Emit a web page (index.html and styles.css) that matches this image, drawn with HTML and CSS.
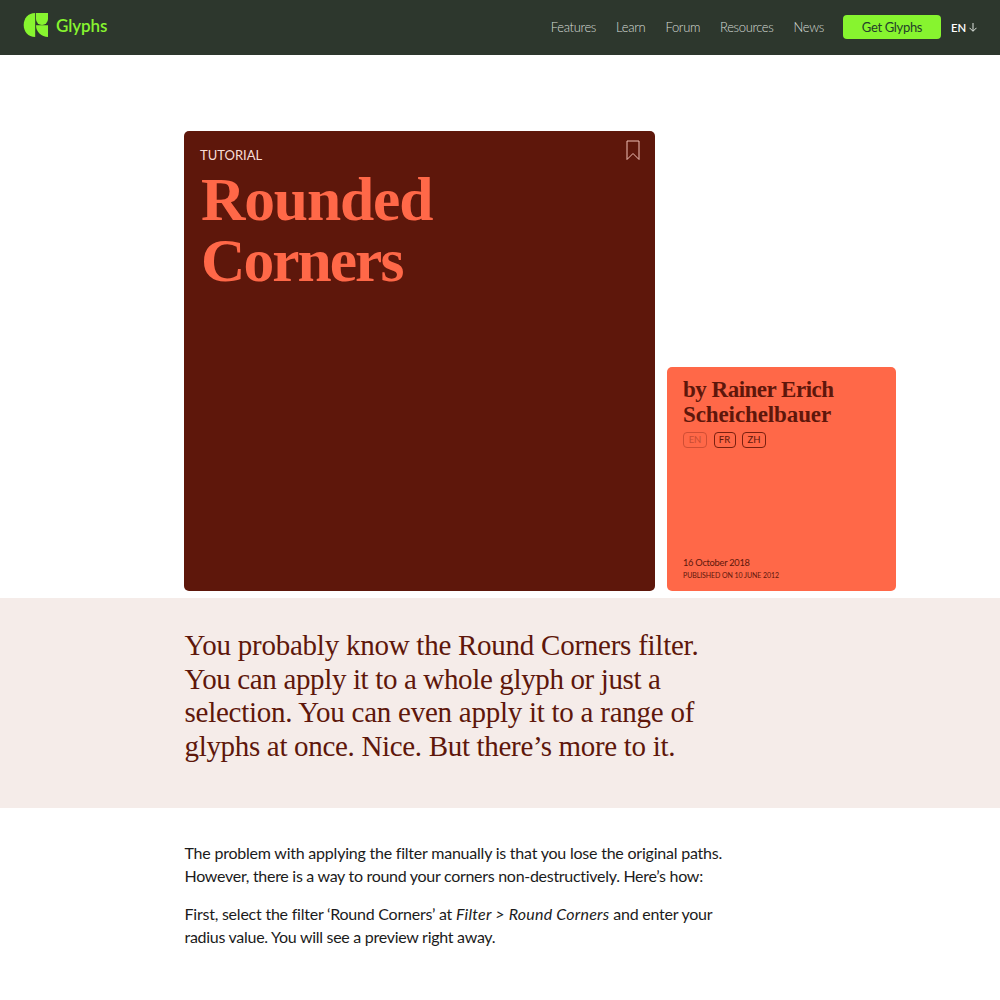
FILE: index.html
```html
<!DOCTYPE html>
<html lang="en">
<head>
<meta charset="utf-8">
<title>Rounded Corners | Glyphs</title>
<link rel="stylesheet" href="styles.css">
</head>
<body>
<header class="bar">
  <a class="brand">
    <svg class="mark" viewBox="0 0 25 24" width="25" height="24"><path d="M12.200 0v24C5 24 .7 18.500 .7 12S5 0 12.200 0z"/><path d="M13 0h12v6A6 6 0 0 1 13 6z"/><path d="M13 12.300h12V24A12 11.700 0 0 1 13 12.300z"/></svg>
    <span class="wordmark">Glyphs</span>
  </a>
  <nav class="menu">
    <a class="n1">Features</a><a class="n2">Learn</a><a class="n3">Forum</a><a class="n4">Resources</a><a class="n5">News</a>
  </nav>
  <a class="buy"><span>Get Glyphs</span></a>
  <a class="lang"><span>EN</span><svg viewBox="0 0 8 9" width="8" height="9"><path d="M4 0v8M.5 4.800L4 8.300 7.500 4.800"/></svg></a>
</header>
<main>
  <section class="hero">
    <div class="title-card">
      <div class="card-head"><span class="kind">TUTORIAL</span>
        <svg class="bookmark" viewBox="0 0 14 21" width="14" height="21"><path d="M1 1h12v18.500L7 13.500 1 19.500z"/></svg></div>
      <h1><span class="t1">Rounded</span><span class="t2">Corners</span></h1>
    </div>
    <div class="author-card">
      <h2><span class="a1">by Rainer Erich</span><br><span class="a2">Scheichelbauer</span></h2>
      <div class="chips"><span class="chip current">EN</span><span class="chip fr">FR</span><span class="chip">ZH</span></div>
      <div class="dates"><p class="updated">16 October 2018</p><p class="published">PUBLISHED ON 10 JUNE 2012</p></div>
    </div>
  </section>
  <section class="lede">
    <p><span class="l1">You probably know the Round Corners filter.</span><br><span class="l2">You can apply it to a whole glyph or just a</span><br><span class="l3">selection. You can even apply it to a range of</span><br><span class="l4">glyphs at once. Nice. But there’s more to it.</span></p>
  </section>
  <article class="body">
    <p><span class="b1">The problem with applying the filter manually is that you lose the original paths.</span><br><span class="b2">However, there is a way to round your corners non-destructively. Here’s how:</span></p>
    <p><span class="b3">First, select the filter ‘Round Corners’ at <em>Filter &gt; Round Corners</em> and enter your</span><br><span class="b4">radius value. You will see a preview right away.</span></p>
  </article>
</main>
</body>
</html>
```
FILE: styles.css
```css
* { box-sizing: border-box; }
body { margin: 0; background: #fff; color: #1b1b1b; font-family: Lato, sans-serif; }
h1, h2, p { margin: 0; white-space: nowrap; }

.bar { display: flex; align-items: center; height: 55px; padding: 0 23px; background: #2d372d; }
.brand { display: flex; align-items: center; gap: 8px; color: #87f42f; }
.mark { fill: currentColor; display: block; margin-top: -5px; }
.wordmark { font-size: 17px; line-height: 24px; font-weight: 600; letter-spacing: -.1px; margin-top: -3px; }
.menu { display: flex; gap: 20px; margin-left: auto; padding-bottom: 2px; color: #d6dcd6; font-size: 13px; font-weight: 300; }
.n1 { letter-spacing: -.35px; }
.n2 { letter-spacing: -.26px; }
.n3 { letter-spacing: -.32px; }
.n4 { letter-spacing: -.38px; }
.n5 { letter-spacing: -.3px; }
.buy { display: flex; align-items: center; justify-content: center; width: 98px; height: 24px; margin: -1px 0 0 19px; border-radius: 4px; background: #87f42f; color: #23402a; font-size: 13px; letter-spacing: -.33px; }
.lang { display: flex; align-items: center; gap: 3px; margin: -1px 0 0 10px; color: #fff; font-size: 11.300px; font-weight: 600; letter-spacing: -.1px; }
.lang svg { fill: none; stroke: #dfe4df; stroke-width: 1; }

.hero { display: grid; grid-template-columns: 471px 229px; column-gap: 12px; align-items: end; padding: 76px 0 7px 184px; }
.title-card { height: 460px; padding: 9px 15px 0 16px; border-radius: 5px; background: #5e170b; }
.card-head { display: flex; justify-content: space-between; height: 29px; color: #f8dcd6; font-size: 13px; line-height: 30px; }
.bookmark { fill: none; stroke: #f0c0b6; stroke-width: 1; }
h1 { padding-left: 1px; font: bold 61.500px/61px "Liberation Serif", serif; color: #ff6848; }
h1 span { display: block; }
.t1 { letter-spacing: -1.150px; }
.t2 { letter-spacing: -1.980px; }
.author-card { display: flex; flex-direction: column; height: 224px; padding: 10px 16px; border-radius: 5px; background: #ff6848; color: #5e170b; }
h2 { font: bold 23px/25px "Liberation Serif", serif; }
.a1 { letter-spacing: -.5px; }
.a2 { letter-spacing: -.1px; }
.chips { display: flex; gap: 6.500px; margin-top: 5px; }
.chip { height: 16px; width: 24px; border: 1px solid #7a2010; border-radius: 4px; font-size: 9.500px; line-height: 14px; text-align: center; }
.fr { width: 22px; }
.current { opacity: .35; }
.dates { margin-top: auto; }
.updated { font-size: 9.300px; line-height: 13px; letter-spacing: -.28px; }
.published { font-size: 7px; line-height: 12px; letter-spacing: -.07px; }

.lede { height: 210px; padding: 31px 0 0 184.500px; background: #f5ece9; color: #5e170b; font: 29px/33.500px "Liberation Serif", serif; font-feature-settings: "liga" 1; }
.l1 { letter-spacing: -.25px; }
.l2 { letter-spacing: -.36px; }
.l3 { letter-spacing: -.25px; }
.l4 { letter-spacing: -.32px; }
.body { padding: 33px 0 0 184.500px; font-size: 16px; line-height: 23px; }
.body p + p { margin-top: 15px; }
.b1 { letter-spacing: -.22px; }
.b2 { letter-spacing: -.29px; }
.b3 { letter-spacing: -.23px; }
.b3 em { letter-spacing: .22px; }
.b4 { letter-spacing: -.28px; }
```
